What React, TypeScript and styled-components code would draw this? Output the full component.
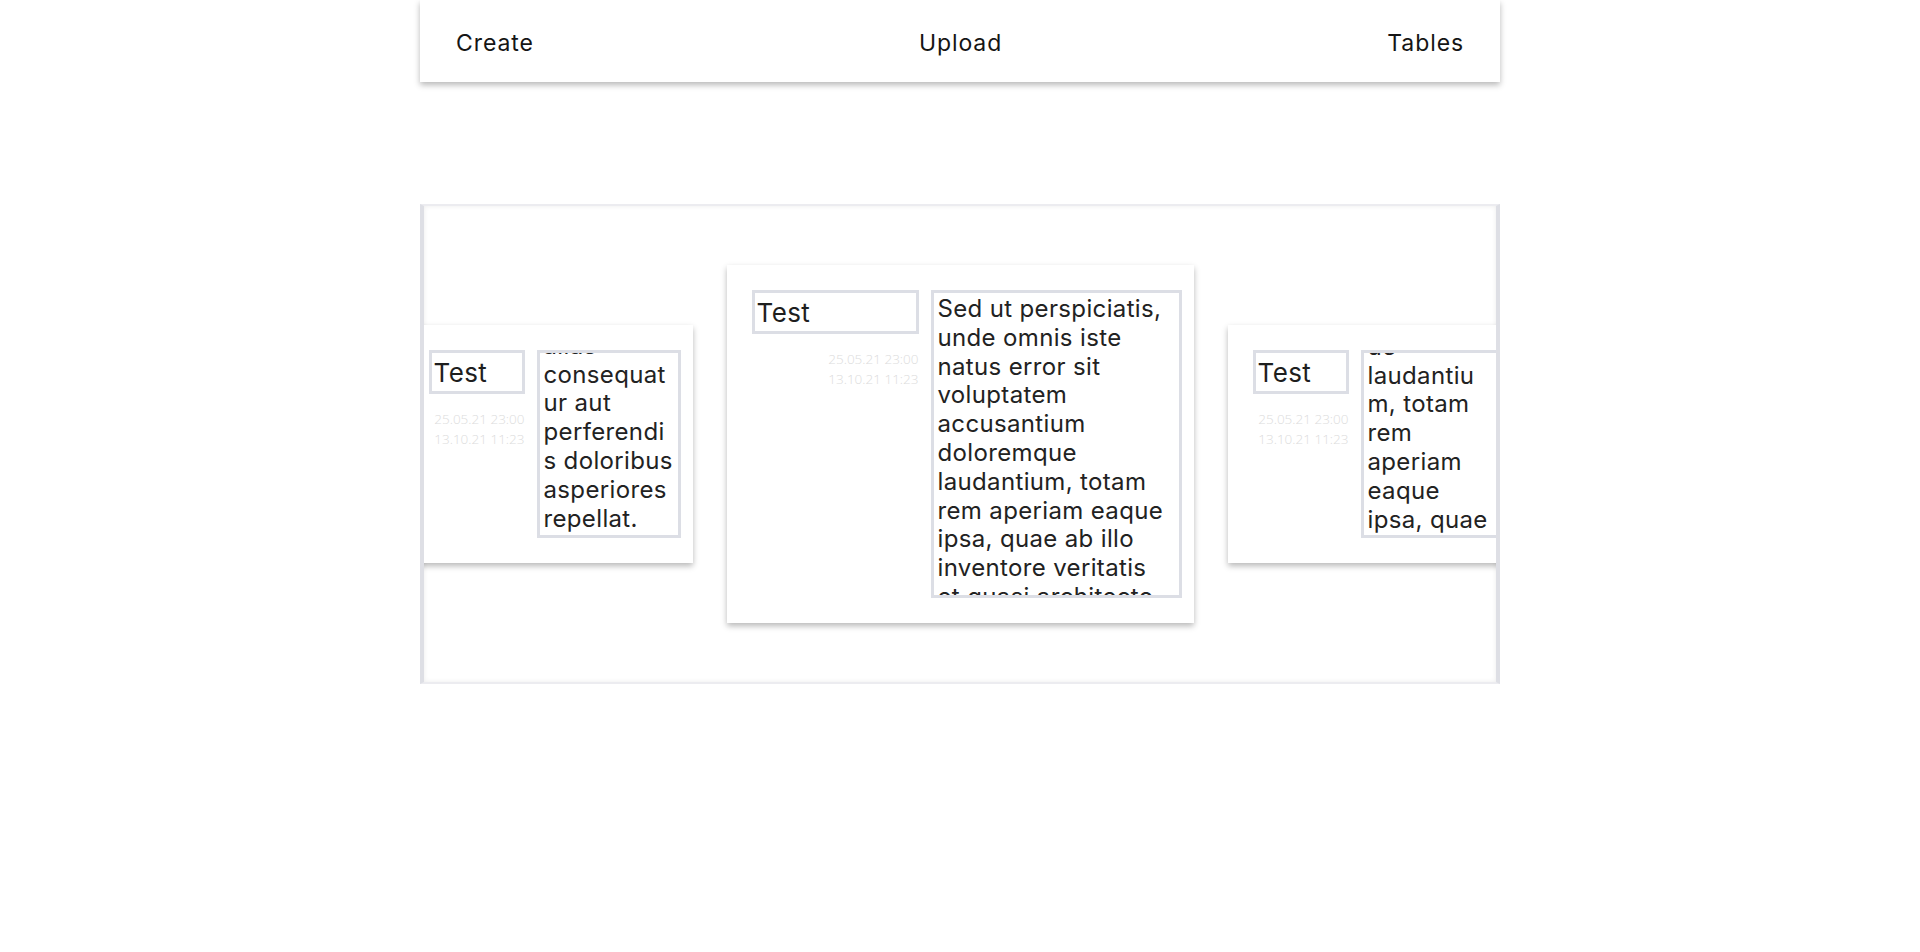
import React, { useLayoutEffect, useRef } from "react";
import styled, { createGlobalStyle } from "styled-components";

const GlobalStyle = createGlobalStyle`
  html, body {
    margin: 0;
    padding: 0;
    background: #ffffff;
  }
  body {
    font-family: Inter, "Open Sans", "DejaVu Sans", sans-serif;
    color: #1b1b1b;
  }
  * { box-sizing: border-box; }
`;

const Page = styled.div`
  width: 1080px;
  margin: 0 auto;
`;

const Nav = styled.nav`
  height: 82px;
  display: flex;
  align-items: center;
  justify-content: space-between;
  padding: 0 36px 0 36px;
  background: #ffffff;
  box-shadow: 0 3px 6px rgba(0, 0, 0, 0.28);
`;

const NavLink = styled.a`
  font-family: Inter, "DejaVu Sans", sans-serif;
  font-size: 23px;
  font-weight: 400;
  letter-spacing: 0.9px;
  color: #151515;
  text-decoration: none;
  cursor: pointer;
  padding-top: 4px;
`;

const Carousel = styled.section`
  margin-top: 122px;
  height: 480px;
  display: flex;
  align-items: center;
  justify-content: center;
  gap: 34px;
  overflow: hidden;
  border-top: 2px solid #ececf0;
  border-bottom: 2px solid #ececf0;
  border-left: 4px solid #dedfe5;
  border-right: 4px solid #dedfe5;
  box-shadow: inset 0 0 5px rgba(0, 0, 0, 0.08);
`;

const Card = styled.article`
  flex: 0 0 auto;
  display: flex;
  gap: 12px;
  padding: 25px 12px 25px 25px;
  background: #ffffff;
  box-shadow: 0 3px 6px rgba(0, 0, 0, 0.28);
`;

const Meta = styled.div<{ $wide?: boolean }>`
  width: ${(p) => (p.$wide ? "167px" : "96px")};
  display: flex;
  flex-direction: column;
`;

const TitleBox = styled.div`
  height: 44px;
  border: 3px solid #dcdee5;
  padding: 0 2px;
  display: flex;
  align-items: center;
  font-size: 26px;
  font-weight: 400;
  letter-spacing: 0.4px;
  color: #1e1e1e;
`;

const Dates = styled.div`
  margin-top: 15px;
  text-align: right;
  font-family: "Open Sans", sans-serif;
  font-size: 13.5px;
  font-weight: 300;
  line-height: 20px;
  color: #dcdcdc;
`;

const TextBox = styled.div<{ $wide?: boolean; $tight?: boolean }>`
  position: relative;
  width: ${(p) => (p.$wide ? "251px" : "144px")};
  height: ${(p) => (p.$wide ? "308px" : "188px")};
  border: 3px solid #dcdee5;
  padding: 2px ${(p) => (p.$tight ? "12px" : "4px")} 2px 4px;
  overflow: hidden;
  font-size: 24px;
  line-height: 28.8px;
  letter-spacing: 0.35px;
  font-weight: 400;
  color: #222222;
  overflow-wrap: break-word;
  word-wrap: break-word;
`;

const Anchor = styled.span``;

const BEFORE =
  "Sed ut perspiciatis, unde omnis iste natus error sit voluptatem accusantium doloremque ";
const AFTER =
  "laudantium, totam rem aperiam eaque ipsa, quae ab illo inventore veritatis et quasi architecto beatae vitae dicta sunt explicabo. Nemo enim ipsam voluptatem, quia voluptas sit, aspernatur aut odit aut fugit, sed quia consequuntur magni dolores eos, qui ratione voluptatem sequi nesciunt, neque porro quisquam est, qui dolorem ipsum, quia dolor sit, amet, consectetur, adipisci velit, sed quia non numquam eius modi tempora incidunt, ut labore et dolore magnam aliquam quaerat voluptatem. Ut enim ad minima veniam, quis nostrum exercitationem ullam corporis suscipit laboriosam, nisi ut aliquid ex ea commodi consequatur? At vero eos et accusamus et iusto odio dignissimos ducimus, qui blanditiis praesentium voluptatum deleniti atque corrupti, quos dolores et quas molestias excepturi sint, obcaecati cupiditate non provident. Temporibus autem quibusdam et aut officiis debitis aut rerum necessitatibus saepe eveniet, ut et voluptates repudiandae sint et molestiae non recusandae. Itaque earum rerum hic tenetur a sapiente delectus, ut aut reiciendis voluptatibus maiores alias consequatur aut perferendis doloribus asperiores repellat.";

type ScrollMode = "top" | "end" | "anchor";

function NoteText({ wide, scroll }: { wide?: boolean; scroll: ScrollMode }) {
  const ref = useRef<HTMLDivElement>(null);
  const anchorRef = useRef<HTMLSpanElement>(null);
  useLayoutEffect(() => {
    const el = ref.current;
    if (!el) return;
    if (scroll === "end") {
      el.scrollTop = el.scrollHeight;
    } else if (scroll === "anchor" && anchorRef.current) {
      el.scrollTop = anchorRef.current.offsetTop - 8;
    } else {
      el.scrollTop = 0;
    }
  }, [scroll]);
  return (
    <TextBox ref={ref} $wide={wide} $tight={scroll === "anchor"}>
      {BEFORE}
      <Anchor ref={anchorRef}>{AFTER}</Anchor>
    </TextBox>
  );
}

function Note({ wide, scroll }: { wide?: boolean; scroll: ScrollMode }) {
  return (
    <Card>
      <Meta $wide={wide}>
        <TitleBox>Test</TitleBox>
        <Dates>
          <div>25.05.21 23:00</div>
          <div>13.10.21 11:23</div>
        </Dates>
      </Meta>
      <NoteText wide={wide} scroll={scroll} />
    </Card>
  );
}

export default function App() {
  return (
    <>
      <GlobalStyle />
      <Page>
        <Nav>
          <NavLink>Create</NavLink>
          <NavLink>Upload</NavLink>
          <NavLink>Tables</NavLink>
        </Nav>
        <Carousel>
          <Note scroll="end" />
          <Note wide scroll="top" />
          <Note scroll="anchor" />
        </Carousel>
      </Page>
    </>
  );
}
